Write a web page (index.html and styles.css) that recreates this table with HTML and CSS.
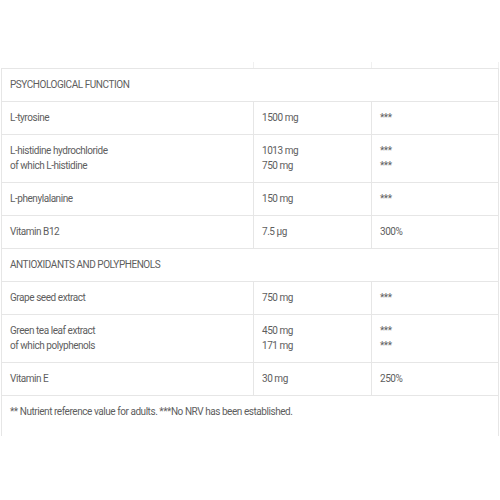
FILE: index.html
```html
<!DOCTYPE html>
<html>
<head>
<meta charset="utf-8">
<link rel="stylesheet" href="styles.css">
</head>
<body>
<div class="wrap">
<table class="nut">
  <colgroup><col class="c1"><col class="c2"><col class="c3"></colgroup>
  <tr class="stub"><td></td><td></td><td></td></tr>
  <tr class="sec"><td colspan="3">PSYCHOLOGICAL FUNCTION</td></tr>
  <tr><td>L-tyrosine</td><td>1500 mg</td><td>***</td></tr>
  <tr class="two"><td>L-histidine hydrochloride<br>of which L-histidine</td><td>1013 mg<br>750 mg</td><td>***<br>***</td></tr>
  <tr><td>L-phenylalanine</td><td>150 mg</td><td>***</td></tr>
  <tr><td>Vitamin B12</td><td>7.5 µg</td><td>300%</td></tr>
  <tr class="sec"><td colspan="3">ANTIOXIDANTS AND POLYPHENOLS</td></tr>
  <tr><td>Grape seed extract</td><td>750 mg</td><td>***</td></tr>
  <tr class="two"><td>Green tea leaf extract<br>of which polyphenols</td><td>450 mg<br>171 mg</td><td>***<br>***</td></tr>
  <tr><td>Vitamin E</td><td>30 mg</td><td>250%</td></tr>
  <tr class="foot"><td colspan="3">** Nutrient reference value for adults. ***No NRV has been established.</td></tr>
</table>
</div>
</body>
</html>
```
FILE: styles.css
```css
html, body {
  margin: 0;
  padding: 0;
  background: #fff;
}
.wrap {
  padding: 62px 2px 0 1px;
}
.nut {
  width: 497px;
  border-collapse: collapse;
  table-layout: fixed;
  font-family: Roboto, "Liberation Sans", sans-serif;
  font-size: 10px;
  letter-spacing: -0.45px;
  color: #5e5e5e;
}
.c1 { width: 252px; }
.c2 { width: 118px; }
.c3 { width: 127px; }
.nut td {
  border: 1px solid #e6e6e6;
  padding: 9px 8px;
  line-height: 14px;
  vertical-align: middle;
}
.nut tr.two td {
  line-height: 14.5px;
}
.nut tr.stub td {
  height: 6px;
  padding: 0;
  border-top: none;
  border-left-color: #f0f0f0;
  border-right-color: #f0f0f0;
}
.nut tr.stub td:first-child { border-left-color: #fff; }
.nut tr.foot td {
  border-bottom: none;
  padding: 9px 8px 17px;
  vertical-align: top;
}
```
